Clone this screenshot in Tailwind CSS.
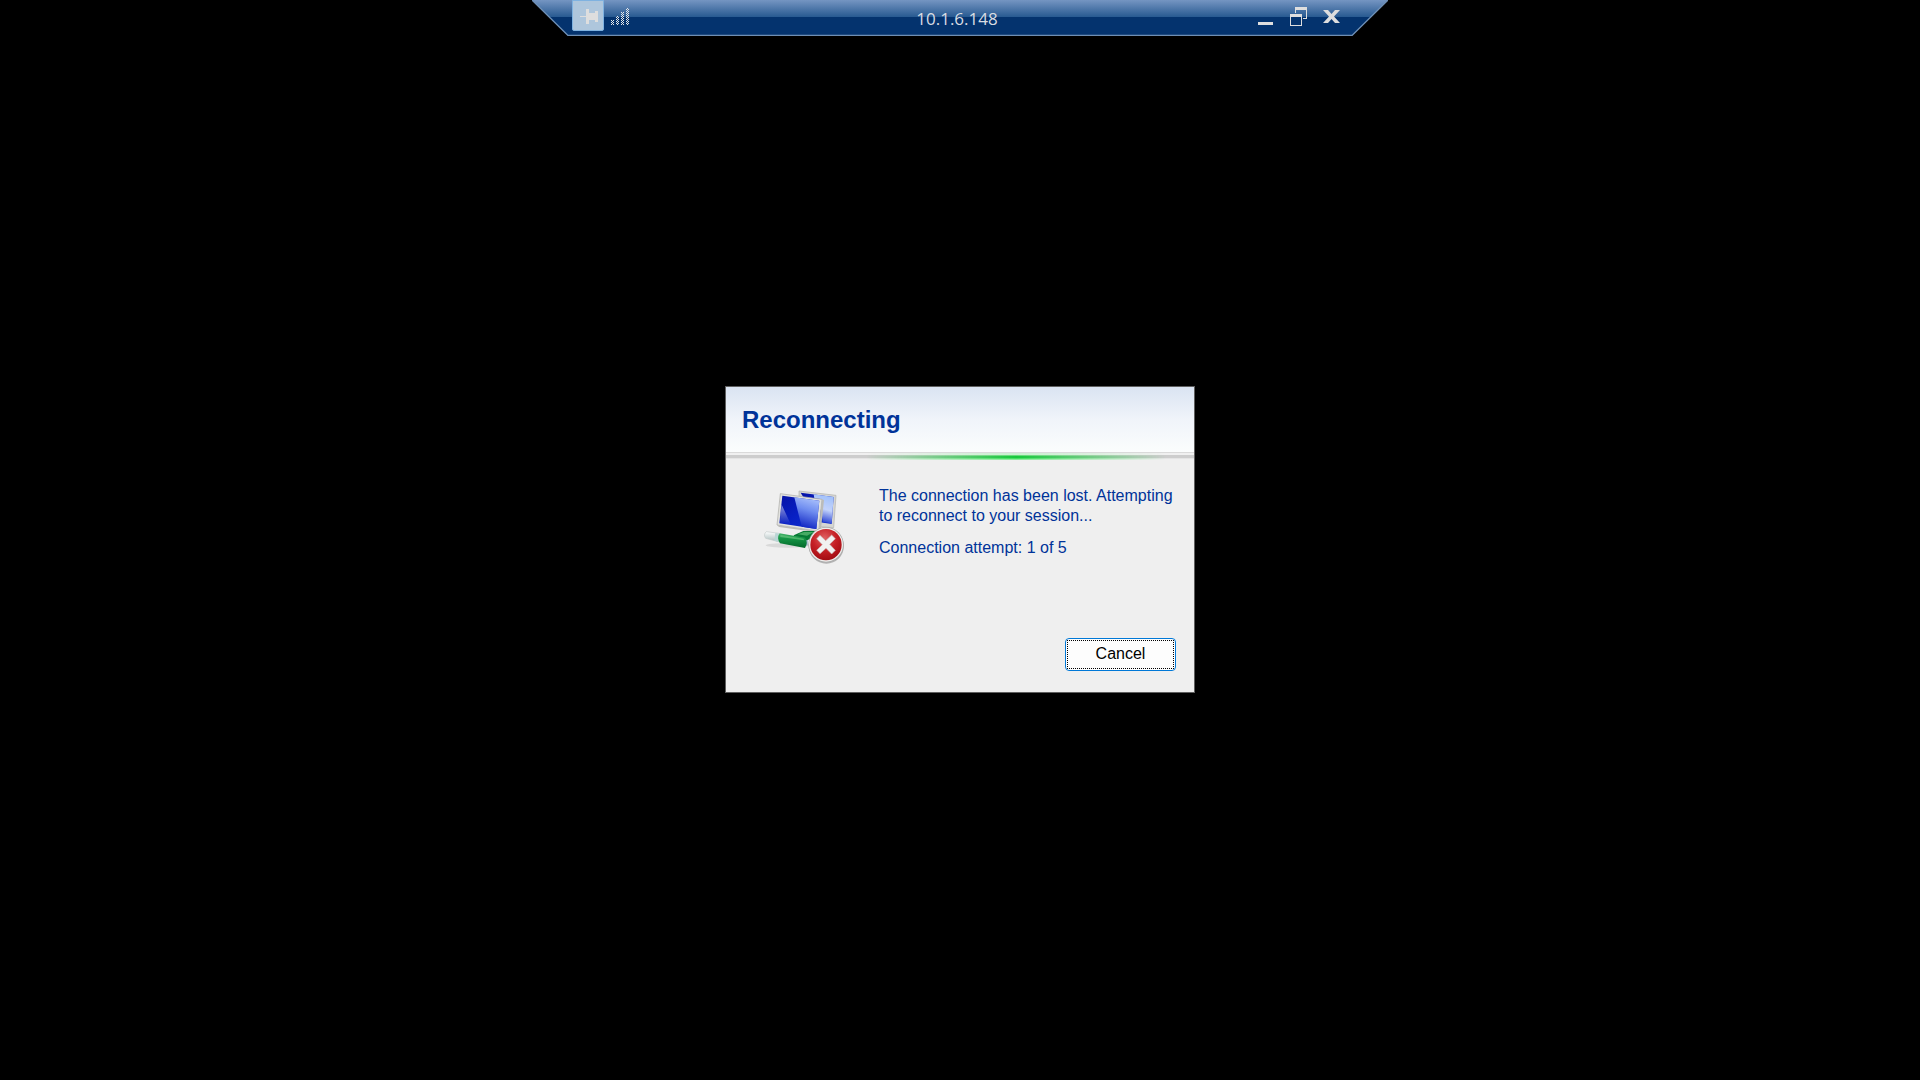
<!DOCTYPE html>
<html lang="en">
<head>
<meta charset="utf-8">
<title>10.1.6.148 - Remote Desktop</title>
<script src="https://cdn.jsdelivr.net/npm/@tailwindcss/browser@4"></script>
</head>
<body class="relative flex min-h-screen flex-col items-center justify-center overflow-hidden bg-black pb-0.5 font-['Liberation_Sans',Arial,sans-serif]">

<header class="absolute top-0 left-1/2 h-9 w-[856px] max-w-full -translate-x-1/2">
  <svg class="absolute inset-0 h-full w-full" viewBox="0 0 856 36" preserveAspectRatio="none" aria-hidden="true">
    <defs><linearGradient id="bar" x1="0" y1="0" x2="0" y2="1">
      <stop offset="0" stop-color="#7595c2"/><stop offset=".47" stop-color="#285a91"/><stop offset=".47" stop-color="#04336e"/><stop offset="1" stop-color="#04336e"/>
    </linearGradient></defs>
    <path d="M0 0H856L820 36H36Z" fill="url(#bar)"/>
    <path d="M0 0L36 35.5H820L856 0" fill="none" stroke="#6f8fb4" stroke-width="1.3"/>
  </svg>
  <div class="relative grid h-full grid-cols-[1fr_auto_1fr] items-start pr-12 pl-10">
    <div class="flex gap-[7px]">
      <button type="button" aria-label="Pin the connection bar" class="h-[31px] w-8 rounded-b-xs border border-[#7fb2e0] bg-[#aec6dc]">
        <svg class="block" width="30" height="29" viewBox="573 1 30 29" fill="#dedede" shape-rendering="crispEdges"><path d="M580 16h6v1h-6zM586 9h3v15h-3zM589 13h6v7h-6zM595 11h3v11h-3z"/></svg>
      </button>
      <svg class="mt-2" width="18" height="17" viewBox="0 0 18 17" role="img" aria-label="Connection quality" shape-rendering="crispEdges">
        <defs><pattern id="dots" width="2" height="2" patternUnits="userSpaceOnUse"><path d="M0 0h1v1H0zM1 1h1v1H1z" fill="#e6e8ea"/></pattern></defs>
        <path d="M0 12h3v5H0zM5 8h3v9H5zM10 4h3v13h-3zM15 0h3v17h-3z" fill="url(#dots)"/>
      </svg>
    </div>
    <span class="pt-[7px] pl-0.5 font-['Open_Sans',sans-serif] text-[17px] leading-6 text-[#d8dce2]">10.1.6.148</span>
    <div class="flex justify-end gap-[15px] pt-[7px] text-[#dedede]">
      <button type="button" aria-label="Minimize"><svg class="block" width="17" height="19" viewBox="0 0 17 19" fill="currentColor"><path d="M0 15h15v3H0z"/></svg></button>
      <button type="button" aria-label="Restore"><svg class="block" width="18" height="19" viewBox="0 0 18 19" fill="currentColor" fill-rule="evenodd" shape-rendering="crispEdges"><path d="M0 7h12v12H0zM1 10v8h10v-8zM5 0h12v12h-4v-1h3V3H6v3H5z"/></svg></button>
      <button type="button" aria-label="Close"><svg class="block" width="17" height="19" viewBox="0 0 17 19" fill="currentColor"><path d="M0 3h5l3.500 4 3.500-4h5l-6 6.500 6 6.500h-5l-3.500-4-3.500 4H0l6-6.500z"/></svg></button>
    </div>
  </div>
</header>

<main role="dialog" aria-labelledby="heading" class="w-[470px] max-w-full border border-[#5f5f5f] bg-[#efefef] text-[#003399]">
  <div class="bg-linear-to-b from-[#dae4f2] via-[#f0f4fa] via-50% to-[#fbfdfd] px-4 pt-[17px] pb-4">
    <h1 id="heading" class="text-2xl leading-8 font-bold">Reconnecting</h1>
  </div>
  <div role="progressbar" aria-label="Reconnecting" class="relative h-2 bg-[linear-gradient(#dadada_0_1px,#f0f0f0_1px_3px,#cdcdcd_3px_6px,#e4e4e4_6px_7px,#efefef_7px)]">
    <svg class="absolute inset-0 h-full w-full" viewBox="0 0 468 8" preserveAspectRatio="none" aria-hidden="true">
      <defs>
        <linearGradient id="fade"><stop offset=".3" stop-color="#fff" stop-opacity="0"/><stop offset=".62" stop-color="#fff"/><stop offset=".94" stop-color="#fff" stop-opacity="0"/></linearGradient>
        <mask id="glow"><rect width="468" height="8" fill="url(#fade)"/></mask>
      </defs>
      <g mask="url(#glow)"><path d="M0 1h468v2H0z" fill="#c9efcf"/><path d="M0 3h468v1H0z" fill="#65dc79"/><path d="M0 4h468v2H0z" fill="#17c83b"/><path d="M0 6h468v1H0z" fill="#43df60"/><path d="M0 7h468v1H0z" fill="#8be99b"/></g>
    </svg>
  </div>
  <div class="flex gap-6 pt-5 pl-[29px]">
    <svg class="shrink-0" width="100" height="90" viewBox="0 0 300 270" role="img" aria-label="Connection lost">
      <defs>
        <linearGradient id="screen" x1="0" y1="0" x2="1" y2="1"><stop offset="0" stop-color="#0713a5"/><stop offset=".5" stop-color="#0820c4"/><stop offset="1" stop-color="#1030d0"/></linearGradient>
        <linearGradient id="shine" x1=".65" y1="0" x2=".4" y2="1"><stop offset="0" stop-color="#a9c0fb"/><stop offset=".4" stop-color="#6f8df0"/><stop offset="1" stop-color="#0b1fc0"/></linearGradient>
        <linearGradient id="glint" x1="0" y1="0" x2="0" y2="1"><stop offset="0" stop-color="#fff" stop-opacity=".55"/><stop offset="1" stop-color="#fff" stop-opacity="0"/></linearGradient>
        <linearGradient id="back" x1=".6" y1="0" x2=".4" y2="1"><stop offset="0" stop-color="#9fc0fb"/><stop offset=".5" stop-color="#c3d3fb"/><stop offset="1" stop-color="#1a34cf"/></linearGradient>
        <linearGradient id="plug" x1="0" y1="0" x2="0" y2="1"><stop offset="0" stop-color="#46b36a"/><stop offset=".35" stop-color="#159545"/><stop offset="1" stop-color="#03682a"/></linearGradient>
        <linearGradient id="tip" x1="0" y1="0" x2="0" y2="1"><stop offset="0" stop-color="#fff"/><stop offset="1" stop-color="#a9bcbc"/></linearGradient>
        <radialGradient id="red" cx=".45" cy=".3" r=".75"><stop offset="0" stop-color="#df6262"/><stop offset=".5" stop-color="#c62026"/><stop offset="1" stop-color="#9d0910"/></radialGradient>
      </defs>
      <path d="M132 33L243 46L236 143L190 139L132 70Z" fill="#d6d6d3" stroke="#b2b2ae" stroke-width="2"/>
      <path d="M137 38L236 51L230 132L190 126Z" fill="url(#screen)"/>
      <path d="M176 43L236 51L230 130L203 126L196 57L178 55Z" fill="url(#back)"/>
      <path d="M76 41L201 58L191 154L66 135Z" fill="#e2e2df" stroke="#a9a9a4" stroke-width="2"/>
      <path d="M191 154L201 58L207 60L197 158L72 141L66 135Z" fill="#bcbcb8"/>
      <path d="M82 47L193 62L184 147L73 130Z" fill="url(#screen)"/>
      <path d="M118 52L193 62L184 147L140 140Z" fill="url(#shine)"/>
      <path d="M80 74L108 134L74 129Z" fill="url(#glint)"/>
      <ellipse cx="98" cy="196" rx="66" ry="7" fill="#c9c9c9" opacity=".6"/>
      <path d="M142 179L158 176L158 196L143 201Z" fill="#92acc2"/>
      <path d="M34 155L73 160L70 185L32 175Q24 164 34 155Z" fill="url(#tip)" stroke="#c3caca" stroke-width="2"/>
      <path d="M61 159L76 161L73 187L58 182Z" fill="#b9d6d5"/>
      <path d="M116 166L145 153L176 153Q186 155 185 167L158 180L126 184Z" fill="#067a34"/>
      <path d="M128 163L147 156L176 156L156 167Z" fill="#72cb86" opacity=".6"/>
      <path d="M74 160L150 173Q160 186 150 204L75 190Q64 174 74 160Z" fill="url(#plug)"/>
      <path d="M76 164L146 176L147 181L76 171Z" fill="#72cb86" opacity=".6"/>
      <circle cx="214" cy="198" r="53" fill="#777" opacity=".5"/>
      <circle cx="213" cy="194" r="53" fill="#aaa"/>
      <circle cx="213" cy="194" r="51" fill="#eeeeec"/>
      <circle cx="213" cy="194" r="47" fill="url(#red)"/>
      <path d="M185 176L195 166L212 182L230 165L241 176L224 193L241 211L230 222L213 205L195 221L185 211L202 194Z" fill="#f1f1f1" stroke="#c9b0b0" stroke-width="2" stroke-linejoin="round"/>
    </svg>
    <div class="flex flex-col gap-3 pt-[6px] text-base leading-5">
      <p>The connection has been lost. Attempting<br>to reconnect to your session...</p>
      <p>Connection attempt: 1 of 5</p>
    </div>
  </div>
  <div class="flex justify-end px-[18px] pt-[68px] pb-[21px]">
    <button type="button" class="h-[33px] w-[111px] rounded-[4px] border border-[#0078d7] bg-[#fdfdfd] p-px text-base text-black"><span class="flex h-full items-center justify-center border border-dotted border-black">Cancel</span></button>
  </div>
</main>
</body>
</html>
